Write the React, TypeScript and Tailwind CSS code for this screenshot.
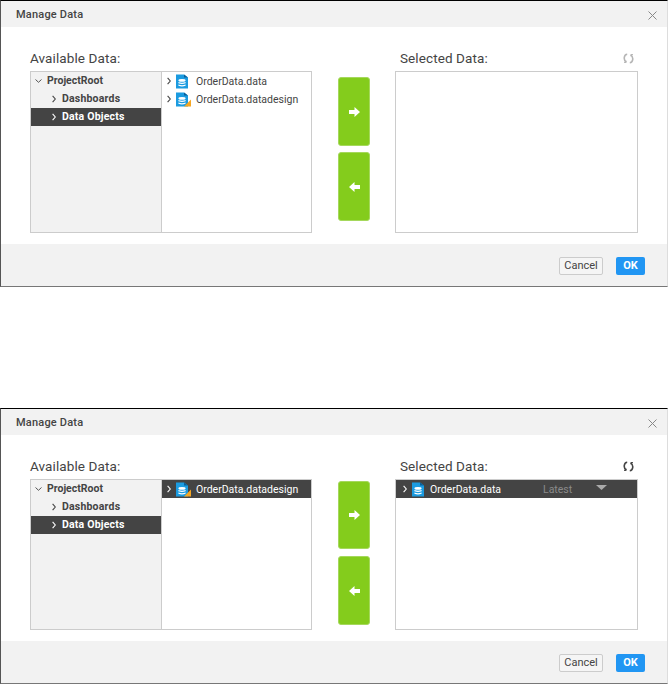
import React from "react";

function Chevron({ className = "" }: { className?: string }) {
  return (
    <svg width="4" height="8" viewBox="0 0 4 8" fill="none" className={`shrink-0 ${className}`}>
      <path d="M0.6 0.8 L3.3 4 L0.6 7.2" stroke="currentColor" strokeWidth="1.1" />
    </svg>
  );
}

function DataIcon({ warn = false }: { warn?: boolean }) {
  return (
    <svg width="15" height="15" viewBox="0 0 15 15" className="shrink-0">
      <path d="M0 0.5 H8 L12 3.5 V14.5 H0 Z" fill="#1b9be0" />
      <path d="M8 0.5 L12 3.5 H8 Z" fill="#0b5f99" />
      <ellipse cx="6" cy="6.4" rx="3.6" ry="1.3" fill="#fff" />
      <path d="M2.4 8 Q6 9.4 9.6 8 V9.2 Q6 10.6 2.4 9.2 Z" fill="#fff" />
      <path d="M2.4 10.6 Q6 12 9.6 10.6 V11.8 Q6 13.2 2.4 11.8 Z" fill="#fff" />
      {warn && <path d="M15 7.5 V14.5 H8 Z" fill="#f5a623" />}
    </svg>
  );
}

function Arrow({ left = false }: { left?: boolean }) {
  return (
    <svg width="11" height="10" viewBox="0 0 11 10" className={left ? "rotate-180" : ""}>
      <path d="M0 3 H5.5 V0 L11 5 L5.5 10 V7 H0 Z" fill="#fff" />
    </svg>
  );
}

function Refresh({ active }: { active: boolean }) {
  return (
    <svg width="11" height="11" viewBox="0 0 11 11" fill="none" stroke={active ? "#444" : "#b5b5b5"} strokeWidth="1.6">
      <path d="M4.2 1.2 C1 1.4 0 6.6 3.2 9.2" />
      <path d="M6.8 9.8 C10 9.6 11 4.4 7.8 1.8" />
      <path d="M3 9.8 V7.6 M3 9.4 H1" strokeWidth="1" />
      <path d="M8 1.2 V3.4 M8 1.6 H10" strokeWidth="1" />
    </svg>
  );
}

function TreeRow({ label, selected }: { label: string; selected?: boolean }) {
  return (
    <div className={`flex h-[18px] items-center pl-[21px] text-[10.5px] font-bold tracking-[0.2px] ${selected ? "bg-[#444444] text-white" : "text-[#444444]"}`}>
      <Chevron className="mr-[6px]" />
      <span className="mb-[1px]">{label}</span>
    </div>
  );
}

function FileRow({ label, warn, selected }: { label: string; warn?: boolean; selected?: boolean }) {
  return (
    <div className={`flex h-[18px] items-center pl-[5px] ${selected ? "bg-[#444444] text-white" : ""}`}>
      <Chevron className="mr-[5px]" />
      <DataIcon warn={warn} />
      <span className="ml-[5px] mt-[1px]">{label}</span>
    </div>
  );
}

function Dialog({ second }: { second: boolean }) {
  const panelH = second ? "h-[151px]" : "h-[162px]";
  return (
    <div className={`flex w-[668px] flex-col border-t border-b border-l border-r border-t-black border-l-[#555555] border-r-[#dddddd] border-b-[#777777] bg-white ${second ? "h-[276px]" : "h-[287px]"}`}>
      <div className="flex h-[26px] shrink-0 items-center justify-between bg-[#f2f2f2] pl-[15px] pr-[10px] pt-[3px] text-[11px] font-medium tracking-[0.2px] text-[#444444]">
        <span>Manage Data</span>
        <svg width="9" height="9" viewBox="0 0 9 9" stroke="#888888" strokeWidth="1">
          <path d="M0.5 0.5 L8.5 8.5 M8.5 0.5 L0.5 8.5" />
        </svg>
      </div>
      <div className="flex flex-1 pl-[29px]">
        <div className="w-[282px] shrink-0 pt-[22px]">
          <div className="h-[22px] text-[13.5px] leading-[18px] tracking-[0.1px] text-[#444444]">Available Data:</div>
          <div className={`flex border border-[#cccccc] ${panelH}`}>
            <div className="w-[131px] shrink-0 border-r border-[#cccccc] bg-[#f2f2f2]">
              <div className="flex h-[18px] items-center pl-[4px] text-[10.5px] font-bold text-[#444444]">
                <svg width="7" height="4" viewBox="0 0 7 4" fill="none" className="mr-[5px] shrink-0">
                  <path d="M0.5 0.5 L3.5 3.3 L6.5 0.5" stroke="#555555" strokeWidth="1" />
                </svg>
                <span className="mb-[1px]">ProjectRoot</span>
              </div>
              <TreeRow label="Dashboards" />
              <TreeRow label="Data Objects" selected />
            </div>
            <div className="flex-1 text-[10.5px] text-[#444444]">
              {second ? (
                <FileRow label="OrderData.datadesign" warn selected />
              ) : (
                <>
                  <FileRow label="OrderData.data" />
                  <FileRow label="OrderData.datadesign" warn />
                </>
              )}
            </div>
          </div>
        </div>
        <div className={`ml-[26px] flex w-[32px] shrink-0 flex-col ${second ? "gap-[7px] pt-[46px]" : "gap-[6px] pt-[50px]"}`}>
          <button className={`flex w-[32px] items-center justify-center rounded-[3px] border border-[#a5d85c] bg-[#84cc1c] ${second ? "h-[68px]" : "h-[69px]"}`}>
            <Arrow />
          </button>
          <button className="flex h-[69px] w-[32px] items-center justify-center rounded-[3px] border border-[#a5d85c] bg-[#84cc1c]">
            <Arrow left />
          </button>
        </div>
        <div className="ml-[25px] w-[243px] shrink-0 pt-[22px]">
          <div className="flex h-[22px] items-start justify-between pl-[5px] pr-[4px]">
            <span className="text-[13.5px] leading-[18px] tracking-[0.1px] text-[#444444]">Selected Data:</span>
            <span className="mt-[4px]"><Refresh active={second} /></span>
          </div>
          <div className={`border border-[#cccccc] text-[10.5px] ${panelH}`}>
            {second && (
              <div className="flex h-[18px] items-center bg-[#444444] pl-[7px] text-white">
                <Chevron className="mr-[5px]" />
                <DataIcon />
                <span className="ml-[3px] mt-[1px] w-[113px]">OrderData.data</span>
                <span className="mt-[1px] w-[53px] text-[#8a8a8a]">Latest</span>
                <svg width="11" height="5" viewBox="0 0 11 5" className="mb-[3px]">
                  <path d="M0 0 H11 L5.5 5 Z" fill="#aaaaaa" />
                </svg>
              </div>
            )}
          </div>
        </div>
      </div>
      <div className="flex h-[42px] shrink-0 items-center justify-end gap-[13px] bg-[#f2f2f2] pr-[22px] pt-[2px]">
        <button className="flex h-[18px] w-[44px] items-center justify-center rounded-[2px] border border-[#cccccc] bg-[#f5f5f5] text-[11px] text-[#444444]">Cancel</button>
        <button className="flex h-[18px] w-[29px] items-center justify-center rounded-[2px] bg-[#2196f3] text-[11px] font-bold text-white">OK</button>
      </div>
    </div>
  );
}

export default function App() {
  return (
    <div className="flex h-[684px] w-[669px] flex-col gap-[121px] overflow-hidden bg-white font-['Roboto','Noto_Sans',sans-serif]">
      <Dialog second={false} />
      <Dialog second />
    </div>
  );
}
